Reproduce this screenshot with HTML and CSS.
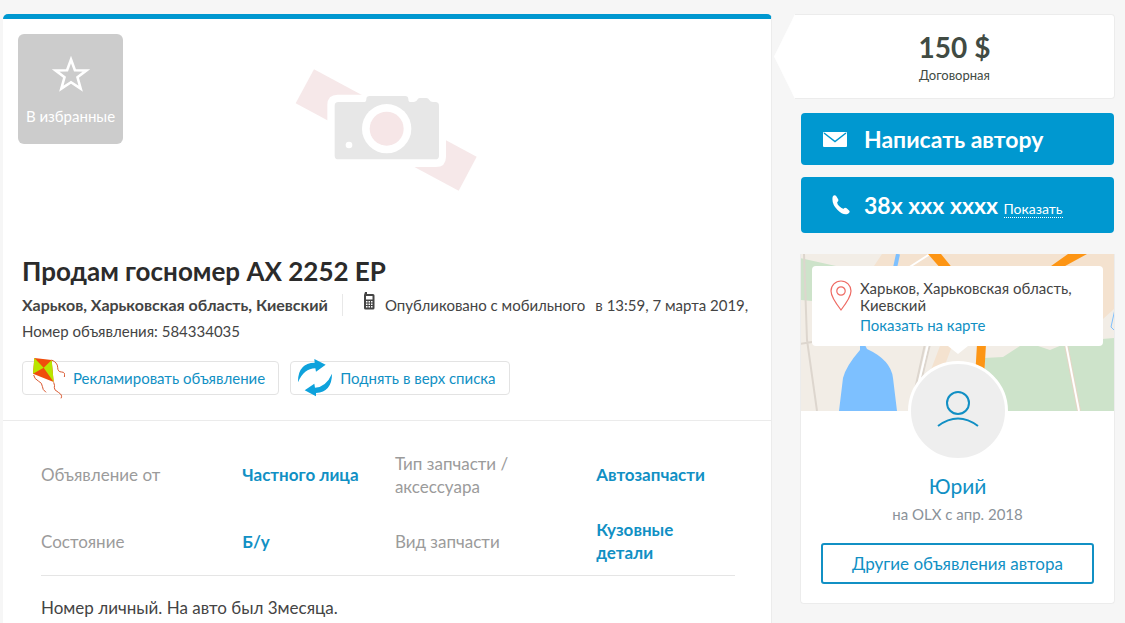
FILE: index.html
```
<!DOCTYPE html>
<html lang="ru">
<head>
  <meta charset="UTF-8">
  <meta name="viewport" content="width=device-width, initial-scale=1.0">
  <title>Продам госномер AX 2252 EP</title>
  <link rel="stylesheet" href="styles.css">
</head>
<body>
  <div class="page">
    <main class="offer">
      <div class="photo">
        <svg class="no-photo" viewBox="0 0 660 480" aria-hidden="true">
          <path fill="#f6e8e9" d="M105 58 593 320 539 422 50 160z"/>
          <path fill="#fff" d="M145 210V165Q145 134 176 134H470Q501 134 501 165V320Q501 351 470 351H400L145 215z"/>
          <path fill="#e7e7e7" d="M178 156H258Q262 156 262 148 262 138 272 138H378Q388 138 388 148 388 156 392 156H405Q413 156 416 148 418 144 424 144H442Q448 144 451 150 454 156 462 156H469Q480 156 480 167V317Q480 328 469 328H178Q167 328 167 317V167Q167 156 178 156z"/>
          <circle cx="323" cy="236" r="74" fill="#fff"/>
          <circle cx="323" cy="236" r="51" fill="#f6e6e7"/>
          <circle cx="210" cy="285" r="10" fill="#fff"/>
        </svg>
        <button class="favorite" type="button">
          <svg width="40" height="38" viewBox="0 0 40 38" aria-hidden="true">
            <path fill="none" stroke="#fff" stroke-width="2.6" d="M20 4.500 23.900 15.200 35.500 15.400 26.500 22.300 29.700 33.700 20 27.200 10.300 33.700 13.500 22.300 4.500 15.400 16.100 15.200z"/>
          </svg>
          <span>В избранные</span>
        </button>
      </div>

      <header class="title-box">
        <h1>Продам госномер AX 2252 EP</h1>
        <div class="meta">
          <strong class="place">Харьков, Харьковская область, Киевский</strong>
          <span class="from-mobile">
            <svg width="12" height="18" viewBox="0 0 12 18" aria-hidden="true">
              <path fill="#444" d="M2 0h2v2h6q1.500 0 1.500 1.500V16q0 1.500-1.500 1.500H2.500Q1 17.500 1 16V3z"/>
              <path fill="#fff" d="M3 4h6.500v3.500H3zM3 9h1.500v1.500H3zM5.500 9H7v1.500H5.500zM8 9h1.500v1.500H8zM3 11.500h1.500V13H3zM5.500 11.500H7V13H5.500zM8 11.500h1.500V13H8zM3 14h1.500v1.500H3zM5.500 14H7v1.500H5.500zM8 14h1.500v1.500H8z"/>
            </svg>
            Опубликовано с мобильного
          </span>
          <span>в 13:59, 7 марта 2019,</span>
          <span>Номер объявления: 584334035</span>
        </div>
        <div class="actions">
          <a href="#">
            <svg width="34" height="42" viewBox="0 0 102 126" aria-hidden="true">
              <path fill="#f04e0c" d="M10 3 62 9 68 75 6 50z"/>
              <path fill="#b9e600" d="M10 3 38 32 6 50zM62 9 38 32 68 75z"/>
              <path fill="none" stroke="#d9572f" stroke-width="3" d="M62 9q18 8 18 22t12 14 8 15M8 54q2 12 14 18t12 16 11 18M68 76q4 10 2 16t12 14 8 18"/>
            </svg>
            <span>Рекламировать объявление</span>
          </a>
          <a class="raise" href="#">
            <svg width="34" height="38" viewBox="0 0 102 114" aria-hidden="true">
              <path fill="#0ea2dc" d="M0 70Q-1 12 50 11L49 0 83 17 54 38 52 28Q18 28 0 70zM102 44Q102 98 54 102V112L20 94 49 74 51 86Q84 84 102 44z"/>
            </svg>
            <span>Поднять в верх списка</span>
          </a>
        </div>
      </header>

      <section class="details">
        <table>
          <tr>
            <th>Объявление от</th>
            <td><a href="#">Частного лица</a></td>
            <th>Тип запчасти / аксессуара</th>
            <td><a href="#">Автозапчасти</a></td>
          </tr>
          <tr>
            <th>Состояние</th>
            <td><a href="#">Б/у</a></td>
            <th>Вид запчасти</th>
            <td><a href="#">Кузовные детали</a></td>
          </tr>
        </table>
        <p class="description">Номер личный. На авто был 3месяца.</p>
      </section>
    </main>

    <aside class="sidebar">
      <div class="price">
        <svg class="price-arrow" viewBox="0 0 21 86" preserveAspectRatio="none" aria-hidden="true">
          <path fill="#fff" d="M21 0 0 43 21 86z"/>
        </svg>
        <div class="price-box">
          <strong>150 $</strong>
          <small>Договорная</small>
        </div>
      </div>

      <div class="contacts">
        <button class="contact" type="button">
          <svg width="24" height="15" viewBox="0 0 24 15" aria-hidden="true">
            <rect width="24" height="15" rx="1" fill="#fff"/>
            <path fill="none" stroke="#0098d0" stroke-width="1.500" d="M1 1 12 9.500 23 1"/>
          </svg>
          <span>Написать автору</span>
        </button>
        <button class="contact phone" type="button">
          <svg width="18" height="20" viewBox="0 0 54 60" aria-hidden="true">
            <path fill="#fff" d="M2 5Q6-1 12 2L18 12Q21 17 16 21 14 26 22 34T35 41Q39 36 44 40L52 47Q55 52 48 56 34 62 16 44T2 5z"/>
          </svg>
          <span>38x xxx xxxx <em>Показать</em></span>
        </button>
      </div>

      <div class="author">
        <div class="map">
          <svg class="map-image" viewBox="0 0 315 157" preserveAspectRatio="xMidYMid slice" aria-hidden="true">
            <path fill="#f2ede6" d="M0 0h315v157H0z"/>
            <path fill="#f4e2cf" d="M82 0H315V18H70zM140 92H152L138 130 124 134zM290 12h25v42l-22 20z"/>
            <path fill="#cde3ca" d="M0 4 45 14V50L0 46zM184 104 203 103 220 92H238L250 96 262 91 290 86 315 84V157H187z"/>
            <path fill="none" stroke="#ddd6ce" stroke-width="2" d="M4 0 7 86 17 157M0 90 12 88M125 90 114 140M130 90 118 140"/>
            <path fill="none" stroke="#fff" stroke-width="2" d="M108 14 130 0M128 90 116 140"/>
            <path fill="none" stroke="#e5d5c5" stroke-width="4" d="M264 80 279 157"/>
            <path fill="none" stroke="#fff" stroke-width="2" d="M264 80 279 157"/>
            <path fill="none" stroke="#7dc0ff" stroke-width="4" d="M98 0 95 14"/>
            <path fill="none" stroke="#7dc0ff" stroke-width="1" d="M315 55 311 73 315 77"/>
            <path fill="#7dc0ff" d="M60 91H65L67 95Q91 106 93 124L97 157H39L43 124Q46 112 60 96z"/>
            <path fill="#fd9514" d="M128 0H141L154 16H142zM268 0H287L256 17H244zM177 90H186L184 124H175z"/>
          </svg>
          <div class="address">
            <svg width="22" height="32" viewBox="0 0 22 32" aria-hidden="true">
              <path fill="none" stroke="#ee6a63" stroke-width="1.200" d="M11 30Q1 17 1 11A10 10 0 0 1 21 11Q21 17 11 30z"/>
              <circle cx="11" cy="11" r="4.200" fill="none" stroke="#ee6a63" stroke-width="1.200"/>
            </svg>
            <div>
              <p>Харьков, Харьковская область, Киевский</p>
              <a href="#">Показать на карте</a>
            </div>
          </div>
        </div>
        <div class="avatar">
          <svg width="42" height="36" viewBox="0 0 42 36" aria-hidden="true">
            <g fill="none" stroke="#118fc4" stroke-width="2">
              <circle cx="21" cy="12" r="11"/>
              <path d="M1 35Q21 20 41 35"/>
            </g>
          </svg>
        </div>
        <a class="name" href="#">Юрий</a>
        <p class="since">на OLX с апр. 2018</p>
        <a class="other" href="#">Другие объявления автора</a>
      </div>
    </aside>
  </div>
</body>
</html>
```
FILE: styles.css
```
* {
  box-sizing: border-box;
}

body {
  margin: 0;
  background: #f6f6f6;
  color: #444;
  font-family: Lato, "Open Sans", sans-serif;
  font-size: 15px;
}

h1,
p {
  margin: 0;
}

a {
  color: #1190c4;
  text-decoration: none;
}

button {
  border: none;
  font-family: inherit;
  cursor: pointer;
}

svg {
  flex: none;
}

.page {
  display: grid;
  grid-template-columns: minmax(0, 1fr) 341px;
  gap: 2px;
  padding: 14px 10px 0 3px;
}

.offer {
  min-height: calc(100vh - 14px);
  background: #fff;
  border-top: 5px solid #0098d0;
  border-right: 1px solid #ececec;
  border-radius: 5px 5px 0 0;
}

.photo {
  position: relative;
  display: flex;
  align-items: center;
  justify-content: center;
  height: 222px;
  padding-left: 4px;
}

.no-photo {
  width: 220px;
  height: 160px;
}

.favorite {
  position: absolute;
  top: 15px;
  left: 15px;
  display: flex;
  flex-direction: column;
  align-items: center;
  gap: 14px;
  width: 105px;
  height: 110px;
  padding: 21px 0 0;
  border-radius: 6px;
  background: #ccc;
  color: #fff;
  font-size: 15px;
  white-space: nowrap;
}

.title-box {
  padding: 13px 19px 25px;
  border-bottom: 1px solid #ebebeb;
}

h1 {
  color: #2b2b2b;
  font-size: 26px;
  line-height: 34px;
}

.meta {
  display: flex;
  flex-wrap: wrap;
  align-items: center;
  column-gap: 10px;
  margin-top: 4px;
  line-height: 26px;
}

.place {
  margin-right: 10px;
  padding-right: 14px;
  border-right: 1px solid #e8e8e8;
  font-size: 16px;
  line-height: 22px;
}

.from-mobile {
  display: flex;
  gap: 10px;
}

.actions {
  display: flex;
  gap: 11px;
  margin-top: 17px;
}

.actions a {
  display: flex;
  align-items: center;
  gap: 8px;
  height: 34px;
  padding: 0 13px 0 8px;
  border: 1px solid #e3e3e3;
  border-radius: 4px;
}

.actions .raise {
  padding-left: 7px;
}

.details {
  padding: 20px 36px 0 38px;
}

table {
  width: 100%;
  border-collapse: collapse;
  border-bottom: 1px solid #e5e5e5;
  table-layout: fixed;
  font-size: 17px;
  line-height: 23px;
}

th,
td {
  width: 22%;
  height: 67px;
  padding: 0;
  text-align: left;
}

th {
  width: 29%;
  padding-right: 60px;
  color: #9b9b9b;
  font-weight: normal;
}

td {
  font-weight: bold;
}

td:last-child {
  width: 20%;
  padding-right: 40px;
}

.description {
  margin-top: 20px;
  font-size: 17px;
  line-height: 24px;
}

.price {
  display: flex;
  height: 85px;
}

.price-arrow {
  width: 21px;
  height: 100%;
}

.price-box {
  display: flex;
  flex: 1;
  flex-direction: column;
  align-items: center;
  justify-content: center;
  gap: 4px;
  border: 1px solid #ececec;
  border-left: none;
  border-radius: 0 4px 4px 0;
  background: #fff;
  color: #414b43;
}

.price-box strong {
  font-size: 28px;
  line-height: 32px;
}

.price-box small {
  font-size: 13px;
}

.contacts {
  display: grid;
  gap: 12px;
  margin: 14px 1px 21px 27px;
}

.contact {
  display: flex;
  align-items: center;
  height: 52px;
  padding: 0 22px;
  gap: 17px;
  border-radius: 4px;
  background: #0098d0;
  color: #fff;
  font-size: 23px;
  font-weight: bold;
  white-space: nowrap;
}

.phone {
  height: 56px;
  padding-left: 31px;
  gap: 14px;
}

.phone em {
  border-bottom: 1px dotted #fff;
  font-size: 14px;
  font-style: normal;
  font-weight: normal;
}

.author {
  display: flex;
  flex-direction: column;
  align-items: center;
  margin-left: 26px;
  padding-bottom: 19px;
  border: 1px solid #ececec;
  border-top: none;
  border-radius: 0 0 4px 4px;
  background: #fff;
}

.map {
  position: relative;
  align-self: stretch;
  height: 157px;
  padding: 12px 11px;
}

.map-image {
  position: absolute;
  top: 0;
  left: 0;
  width: 100%;
  height: 100%;
}

.address {
  position: relative;
  display: flex;
  gap: 8px;
  height: 80px;
  padding: 14px 18px 0;
  border-radius: 4px;
  background: #fff;
  line-height: 17px;
}

.address::after {
  content: "";
  position: absolute;
  top: 100%;
  left: 50%;
  margin-left: -10px;
  border: 10px solid transparent;
  border-top: 8px solid #fff;
  border-bottom: none;
}

.address a {
  display: block;
  margin-top: 3px;
}

.avatar {
  position: relative;
  display: flex;
  align-items: center;
  justify-content: center;
  width: 100px;
  height: 100px;
  margin-top: -50px;
  padding-bottom: 4px;
  border: 3px solid #fff;
  border-radius: 50%;
  background: #eee;
}

.name {
  margin-top: 10px;
  font-size: 21px;
  line-height: 30px;
}

.since {
  margin-top: 2px;
  color: #8a9299;
  line-height: 22px;
}

.other {
  align-self: stretch;
  margin: 18px 20px 0;
  border: 2px solid #1190c4;
  border-radius: 3px;
  font-size: 17px;
  line-height: 37px;
  text-align: center;
}
```
